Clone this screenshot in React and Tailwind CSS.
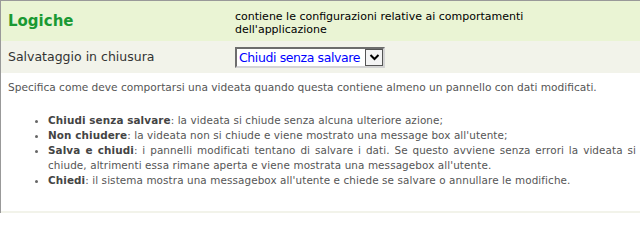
import React from 'react';

const ITEMS = [
  { term: 'Chiudi senza salvare', text: ': la videata si chiude senza alcuna ulteriore azione;' },
  { term: 'Non chiudere', text: ': la videata non si chiude e viene mostrato una message box all\'utente;' },
  { term: 'Salva e chiudi', text: ': i pannelli modificati tentano di salvare i dati. Se questo avviene senza errori la videata si chiude, altrimenti essa rimane aperta e viene mostrata una messagebox all\'utente.' },
  { term: 'Chiedi', text: ': il sistema mostra una messagebox all\'utente e chiede se salvare o annullare le modifiche.' },
];

export default function App() {
  return (
    <div className="w-[640px] h-[213px] overflow-hidden bg-white border-t border-l border-[#999] font-['DejaVu_Sans',sans-serif]">
      {/* header */}
      <div className="flex h-[40px] bg-[#eaf4d4]">
        <div className="w-[234px] pl-[7px] flex items-center text-[15px] font-bold text-[#1a9933]">Logiche</div>
        <div className="flex-1 pt-[9px] text-[11px] leading-[13px] text-black">
          contiene le configurazioni relative ai comportamenti<br />dell'applicazione
        </div>
      </div>

      {/* setting row */}
      <div className="flex h-[32px] items-center bg-[#f2f3ea]">
        <div className="w-[234px] pl-[7px] text-[12.5px] text-[#333]">Salvataggio in chiusura</div>
        <div className="flex h-[21px] w-[150px] items-stretch border-2 border-t-[#6d6d6d] border-l-[#6d6d6d] border-r-[#d4d4d4] border-b-[#d4d4d4] bg-white">
          <span className="flex-1 whitespace-nowrap pl-[2px] text-[12.5px] leading-[17px] tracking-[-0.4px] text-[#0000ff]">Chiudi senza salvare</span>
          <span className="flex w-[18px] items-center justify-center border border-[#555] bg-[#f4f4f4]">
            <svg width="11" height="8" viewBox="0 0 11 8">
              <polyline points="1.5,2 5.5,6 9.5,2" fill="none" stroke="#000" strokeWidth="2" />
            </svg>
          </span>
        </div>
      </div>

      <div className="h-[138px]">
        {/* description */}
        <p className="pl-[7px] pt-[7px] text-[10.6px] leading-[14px] text-[#555]">
          Specifica come deve comportarsi una videata quando questa contiene almeno un pannello con dati modificati.
        </p>

        <ul className="mt-[19px] pl-[47px] pr-[4px] text-[10.4px] leading-[15px] tracking-[0.1px] text-[#555] text-justify list-disc marker:text-[#666]">
          {ITEMS.map((it) => (
            <li key={it.term}>
              <b className="text-[#444]">{it.term}</b>{it.text}
            </li>
          ))}
        </ul>
      </div>
      <div className="h-[2px] bg-[#f2f3ea]" />
    </div>
  );
}
